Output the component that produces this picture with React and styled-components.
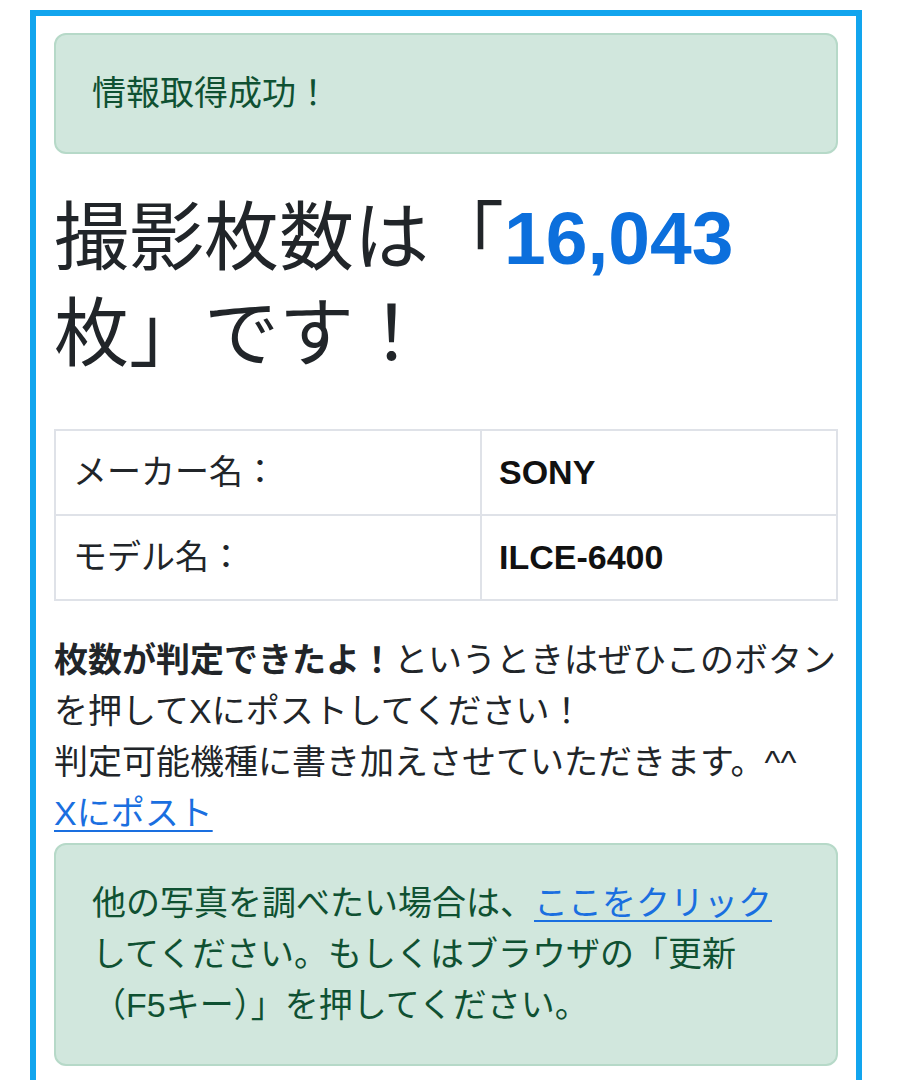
import styled, { createGlobalStyle } from "styled-components";

const GlobalStyle = createGlobalStyle`
  html, body {
    margin: 0;
    padding: 0;
    background: #ffffff;
  }

  body {
    font-family: "Liberation Sans", "Noto Sans CJK JP", sans-serif;
    color: #212529;
    font-size: 34px;
    line-height: 51px;
  }
`;

const Frame = styled.div`
  box-sizing: border-box;
  width: 832px;
  margin: 10px 0 0 30px;
  padding: 17px 18px 40px;
  border: 6px solid #12a5ee;
  border-bottom: none;
  min-height: 1070px;
`;

const Alert = styled.div`
  box-sizing: border-box;
  padding: 33px 36px;
  background: #d1e7dd;
  border: 2px solid #b6d9c8;
  border-radius: 12px;
  color: #0f5132;
  margin-top: ${props => props.top || 0}px;
  margin-bottom: ${props => props.bottom || 0}px;
`;

const Headline = styled.h1`
  margin: 0 0 47px;
  font-size: 75px;
  line-height: 96px;
  font-weight: 400;
  color: #212529;

  .count {
    color: #0c6fdc;
    font-weight: 700;
  }
`;

const InfoTable = styled.table`
  width: 784px;
  border-collapse: collapse;
  table-layout: fixed;
  margin-bottom: 34px;

  td {
    border: 2px solid #dfe2e8;
    padding: 16px 19px 16px 17px;
    line-height: 51px;
    vertical-align: middle;
  }

  td:first-child {
    width: 388px;
  }

  td.value {
    font-weight: 700;
    color: #111111;
  }
`;

const Note = styled.p`
  margin: 0;

  strong {
    font-weight: 700;
  }
`;

const Link = styled.a`
  color: #1a6fe0;
  text-decoration: underline;
  text-underline-offset: 5px;
  text-decoration-thickness: 2px;
`;

const App = () => {
    const rows = [
        {label: "メーカー名：", value: "SONY"},
        {label: "モデル名：", value: "ILCE-6400"},
    ];

    return (
        <>
            <GlobalStyle/>
            <Frame>
                <Alert bottom={36}>情報取得成功！</Alert>
                <Headline>
                    撮影枚数は「<span className="count">16,043</span>枚」です！
                </Headline>
                <InfoTable>
                    <tbody>
                    {rows.map(row => (
                        <tr key={row.label}>
                            <td>{row.label}</td>
                            <td className="value">{row.value}</td>
                        </tr>
                    ))}
                    </tbody>
                </InfoTable>
                <Note>
                    <strong>枚数が判定できたよ！</strong>というときはぜひこのボタンを押してXにポストしてください！<br/>
                    判定可能機種に書き加えさせていただきます。^^<br/>
                    <Link href="#">Xにポスト</Link>
                </Note>
                <Alert top={4}>
                    他の写真を調べたい場合は、<Link href="#">ここをクリック</Link>してください。もしくはブラウザの「更新（F5キー）」を押してください。
                </Alert>
            </Frame>
        </>
    );
};

export default App;
